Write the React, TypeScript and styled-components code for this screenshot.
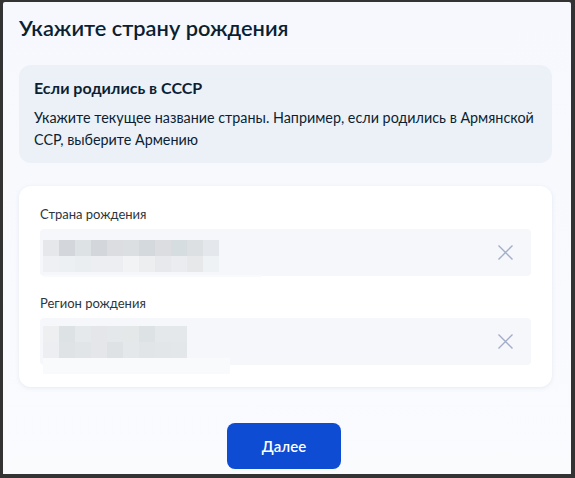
import React from "react";
import styled, { createGlobalStyle } from "styled-components";

const Global = createGlobalStyle`
  html, body { margin: 0; padding: 0; background: #333333; }
  body { font-family: Lato, "Noto Sans", sans-serif; color: #0b1f33; }
  * { box-sizing: border-box; }
`;

const Frame = styled.div`
  width: 575px;
  height: 478px;
  padding: 2px 4px 4px 3px;
  background: #333333;
`;

const Screen = styled.div`
  height: 100%;
  background: linear-gradient(180deg, #f6f8fd 0%, #fafbfd 100%);
  border-radius: 2px 2px 0 0;
  padding: 12px 19px 0 16px;
  display: flex;
  flex-direction: column;
`;

const Title = styled.h1`
  margin: 0 0 23px 0;
  font-size: 21.8px;
  line-height: 28px;
  font-weight: 600;
  color: #0b1f33;
`;

const Info = styled.div`
  background: #ecf1f8;
  border-radius: 12px;
  padding: 11px 16px 12px 15px;
`;

const InfoHead = styled.div`
  font-size: 16px;
  line-height: 24px;
  font-weight: 700;
  margin-bottom: 7px;
`;

const InfoText = styled.div`
  font-size: 14.35px;
  line-height: 22px;
  color: #0b1f33;
`;

const Card = styled.div`
  margin-top: 23px;
  background: #ffffff;
  border-radius: 12px;
  box-shadow: 0 1px 4px rgba(140, 160, 200, 0.18);
  padding: 18px 21px 22px;
  display: flex;
  flex-direction: column;
  gap: 17px;
`;

const Group = styled.div`
  display: flex;
  flex-direction: column;
`;

const Label = styled.div`
  font-size: 13px;
  line-height: 20px;
  margin-bottom: 5px;
  color: #2c3641;
`;

const Field = styled.div`
  position: relative;
  height: 47px;
  background: #f5f7fa;
  border-radius: 4px;
  display: flex;
  align-items: center;
  padding: 0 18px 0 3px;
`;

const Mosaic = styled.div<{ $top: number }>`
  display: grid;
  grid-auto-flow: column;
  grid-template-rows: 16px 16px;
  grid-auto-columns: 16px;
  align-self: flex-start;
  margin-top: ${(p) => p.$top}px;
`;

const Cell = styled.div``;

const Strip = styled.div<{ $left: number; $top: number; $w: number; $h: number }>`
  position: absolute;
  left: ${(p) => p.$left}px;
  top: ${(p) => p.$top}px;
  width: ${(p) => p.$w}px;
  height: ${(p) => p.$h}px;
  background: #f9fafc;
`;

const Clear = styled.button`
  margin-left: auto;
  width: 15px;
  height: 15px;
  padding: 0;
  border: 0;
  background: none;
  display: flex;
`;

const Footer = styled.div`
  display: flex;
  justify-content: center;
  margin-top: 36px;
  padding-right: 3px;
`;

const Button = styled.button`
  width: 114px;
  height: 46px;
  border: 0;
  border-radius: 8px;
  background: #0d4cd3;
  color: #ffffff;
  font-family: Lato, "Noto Sans", sans-serif;
  font-size: 15px;
  font-weight: 600;
`;

const CloseIcon = () => (
  <svg width="15" height="15" viewBox="0 0 15 15" fill="none">
    <path d="M0.5 0.5L14.5 14.5M14.5 0.5L0.5 14.5" stroke="#a3adc9" strokeWidth="1.4" />
  </svg>
);

const countryTop = ["#e5e7ea", "#d3d7db", "#dde2e5", "#d3d6db", "#dcdde1", "#dcdfe1", "#d3d9dc", "#dcdde1", "#d6dde0", "#dde0e2", "#e4e8ec"];
const countryBottom = ["#eef0f3", "#edf0f3", "#eaeef0", "#eceef1", "#eceef1", "#f2f3f5", "#edeef0", "#e8e9ec", "#eaecef", "#e6e8ea", "#eff2f4"];
const regionTop = ["#eeeff1", "#dde2e5", "#e6e9ec", "#e4e6e9", "#e4e8eb", "#e4e8e9", "#dde2e5", "#e4e8eb", "#e4e8eb"];
const regionBottom = ["#eceef1", "#dfe3e6", "#e2e5e8", "#e5e6e9", "#dee2e5", "#e5e8ea", "#e2e5e8", "#e2e6e9", "#e4e7ea"];

const MosaicBlock: React.FC<{ top: string[]; bottom: string[]; offset: number }> = ({ top, bottom, offset }) => (
  <Mosaic $top={offset}>
    {top.map((c, i) => (
      <React.Fragment key={i}>
        <Cell style={{ background: c }} />
        <Cell style={{ background: bottom[i] }} />
      </React.Fragment>
    ))}
  </Mosaic>
);

export default function App() {
  return (
    <>
      <Global />
      <Frame>
        <Screen>
          <Title>Укажите страну рождения</Title>
          <Info>
            <InfoHead>Если родились в СССР</InfoHead>
            <InfoText>
              Укажите текущее название страны. Например, если родились в Армянской
              ССР, выберите Армению
            </InfoText>
          </Info>
          <Card>
            <Group>
              <Label>Страна рождения</Label>
              <Field>
                <MosaicBlock top={countryTop} bottom={countryBottom} offset={11} />
                <Strip $left={4} $top={46} $w={218} $h={2} />
                <Clear aria-label="Очистить">
                  <CloseIcon />
                </Clear>
              </Field>
            </Group>
            <Group>
              <Label>Регион рождения</Label>
              <Field>
                <MosaicBlock top={regionTop} bottom={regionBottom} offset={8} />
                <Strip $left={3} $top={40} $w={187} $h={16} />
                <Clear aria-label="Очистить">
                  <CloseIcon />
                </Clear>
              </Field>
            </Group>
          </Card>
          <Footer>
            <Button>Далее</Button>
          </Footer>
        </Screen>
      </Frame>
    </>
  );
}
